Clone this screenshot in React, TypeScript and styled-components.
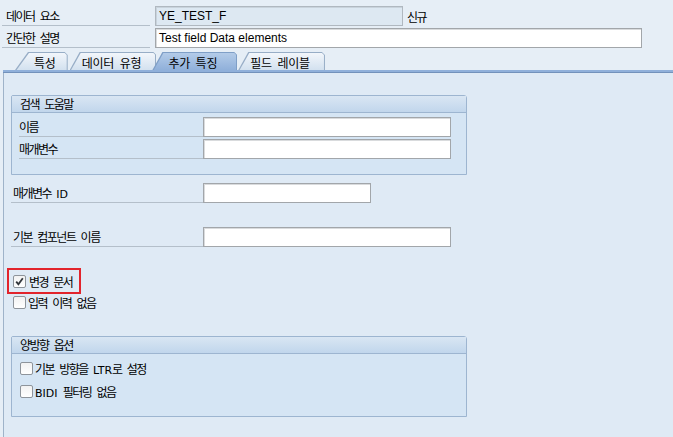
import { createGlobalStyle } from "styled-components";
import styled, { css } from "styled-components";

const GlobalStyle = createGlobalStyle`
  body {
    margin: 0;
    font-family: "Noto Sans CJK KR", "Liberation Sans", sans-serif;
    font-size: 12px;
    color: #000000;
  }
`;

const Page = styled.div`
  width: 673px;
  height: 437px;
  overflow: hidden;
  background: #e6eef6;
  display: flex;
  flex-direction: column;
`;

const Header = styled.div`
  display: flex;
  flex-direction: column;
  gap: 2px;
  padding-top: 6px;
`;

const HeadRow = styled.div`
  display: flex;
  align-items: flex-end;
  height: 20px;
`;

const Label = styled.div<{ width: number; pad?: number }>`
  width: ${({ width }) => width}px;
  height: 20px;
  box-sizing: border-box;
  padding-left: ${({ pad }) => pad ?? 0}px;
  border-bottom: 1px solid #b4bfca;
  line-height: 19px;
  letter-spacing: -1.5px;
  word-spacing: 4px;
  white-space: pre;
`;

const HeadLabel = styled(Label)`
  margin-left: 2px;
  margin-right: 5px;
`;

// latin parts of mixed labels keep their natural spacing
const Latin = styled.span`
  letter-spacing: 0;
  font-family: "DejaVu Sans", sans-serif;
  font-size: 11px;
`;

const Caption = styled.span`
  white-space: pre;
`;

interface IBoxProps {
  readOnly?: boolean;
  width: number;
}

const Box = styled.div<IBoxProps>`
  width: ${({ width }) => width}px;
  height: 20px;
  box-sizing: border-box;
  border: 1px solid #a2a6aa;
  box-shadow: inset 1px 1px 0 #d9dbdd;
  background: #ffffff;
  padding: 0 3px;
  display: flex;
  align-items: center;
  font-family: "Liberation Sans", sans-serif;
  font-size: 12px;
  white-space: nowrap;

  ${({ readOnly }) =>
    readOnly &&
    css`
      background: #dde8f2;
      border-color: #b0b8c0;
      box-shadow: inset 1px 1px 0 #c9d3dc;
    `}
`;

const Status = styled.span`
  margin-left: 4px;
  align-self: center;
  letter-spacing: -1.5px;
`;

const TabStrip = styled.div`
  display: flex;
  align-items: flex-end;
  height: 18px;
  margin-top: 4px;
  padding-left: 15px;
`;

interface ITabProps {
  active?: boolean;
  first?: boolean;
}

const Tab = styled.div<ITabProps>`
  position: relative;
  height: 18px;
  box-sizing: border-box;
  padding: 2px 15px 0 12px;
  margin-right: 2px;
  display: flex;
  align-items: center;
  letter-spacing: -0.2px;
  word-spacing: 3px;
  white-space: nowrap;
  background: #97adc6;
  clip-path: polygon(0 100%, 10px 0, calc(100% - 3px) 0, 100% 3px, 100% 100%);

  &::before {
    content: "";
    position: absolute;
    top: 1px;
    left: 0;
    right: 1px;
    bottom: 0;
    background: linear-gradient(#f2f6fb, #d3e1ef);
    clip-path: polygon(1.4px 100%, 11px 0, calc(100% - 2px) 0, 100% 2px, 100% 100%);
  }

  span {
    position: relative;
  }

  ${({ first }) =>
    first &&
    css`
      padding-left: 19px;
      padding-right: 12px;
      clip-path: polygon(0 100%, 13px 0, calc(100% - 3px) 0, 100% 3px, 100% 100%);
      &::before {
        clip-path: polygon(1.6px 100%, 14px 0, calc(100% - 2px) 0, 100% 2px, 100% 100%);
      }
    `}

  ${({ active }) =>
    active &&
    css`
      margin-left: -6px;
      margin-right: 1px;
      padding-left: 16px;
      padding-right: 20px;
      background: #7f9fc7;
      &::before {
        background: linear-gradient(#b3cbe8, #90b0da);
      }
    `}
`;

const TabLine = styled.div`
  margin-left: 3px;
  height: 3px;
  background: linear-gradient(#90b0da 0 2px, #7392bb 2px);
`;

const Panel = styled.div`
  flex: 1;
  margin-left: 3px;
  border-left: 1px solid #9fb3c9;
  background: #dfeaf5;
  padding: 22px 0 0 7px;
  display: flex;
  flex-direction: column;
`;

const Group = styled.div<{ height: number }>`
  width: 456px;
  height: ${({ height }) => height}px;
  box-sizing: border-box;
  border: 1px solid #9db5d0;
  border-radius: 2px 3px 0 0;
  background: #d5e5f4;
  display: flex;
  flex-direction: column;
`;

const GroupTitle = styled.div`
  height: 17px;
  box-sizing: border-box;
  border-bottom: 1px solid #9db5d0;
  background: linear-gradient(#d9e6f3, #c1d6ec);
  padding-left: 8px;
  line-height: 16px;
  letter-spacing: -1.5px;
  word-spacing: 4px;
  white-space: pre;
`;

const GroupBody = styled.div<{ gap: number; top: number; left: number }>`
  display: flex;
  flex-direction: column;
  gap: ${({ gap }) => gap}px;
  padding: ${({ top }) => top}px 0 0 ${({ left }) => left}px;
`;

const FieldRow = styled.div`
  display: flex;
  align-items: flex-end;
  height: 20px;
`;

const Spacer = styled.div<{ h: number }>`
  height: ${({ h }) => h}px;
  flex: none;
`;

const CheckRow = styled.label<{ marked?: boolean; indent?: number }>`
  display: flex;
  align-items: center;
  gap: 2px;
  height: 20px;
  width: max-content;
  box-sizing: border-box;
  margin-left: ${({ indent }) => indent ?? 0}px;
  letter-spacing: -1.5px;
  word-spacing: 4px;

  ${({ marked }) =>
    marked &&
    css`
      outline: 2px solid #e2242c;
      padding: 0 7px 0 4px;
      margin-left: -2px;
      height: 22px;
      gap: 3px;
    `}
`;

const CheckBox = styled.span`
  width: 13px;
  height: 13px;
  box-sizing: border-box;
  border: 1px solid #8e949b;
  border-radius: 2px;
  background: linear-gradient(#f2f2f2, #ffffff);
  display: flex;
  align-items: center;
  justify-content: center;
`;

const Check = () => (
  <svg width="9" height="9" viewBox="0 0 9 9">
    <path d="M1.2 4.6 L3.4 7.2 L7.8 1.2" fill="none" stroke="#33373c" strokeWidth="1.8" />
  </svg>
);

export default function App() {
  return (
    <Page>
      <GlobalStyle />
      <Header>
        <HeadRow>
          <HeadLabel width={148} pad={4}>
            데이터 요소
          </HeadLabel>
          <Box width={248} readOnly>
            YE_TEST_F
          </Box>
          <Status>신규</Status>
        </HeadRow>
        <HeadRow>
          <HeadLabel width={148} pad={4}>
            간단한 설명
          </HeadLabel>
          <Box width={487}>Test field Data elements</Box>
        </HeadRow>
      </Header>
      <TabStrip>
        <Tab first>
          <span>특성</span>
        </Tab>
        <Tab>
          <span>데이터 유형</span>
        </Tab>
        <Tab active>
          <span>추가 특징</span>
        </Tab>
        <Tab>
          <span>필드 레이블</span>
        </Tab>
      </TabStrip>
      <TabLine />
      <Panel>
        <Group height={80}>
          <GroupTitle>검색 도움말</GroupTitle>
          <GroupBody gap={2} top={4} left={7}>
            <FieldRow>
              <Label width={184}>이름</Label>
              <Box width={248} />
            </FieldRow>
            <FieldRow>
              <Label width={184}>매개변수</Label>
              <Box width={248} />
            </FieldRow>
          </GroupBody>
        </Group>
        <Spacer h={8} />
        <FieldRow>
          <Label width={192} pad={2}>
            매개변수 <Latin>ID</Latin>
          </Label>
          <Box width={168} />
        </FieldRow>
        <Spacer h={24} />
        <FieldRow>
          <Label width={192} pad={2}>
            기본 컴포넌트 이름
          </Label>
          <Box width={248} />
        </FieldRow>
        <Spacer h={23} />
        <CheckRow marked>
          <CheckBox>
            <Check />
          </CheckBox>
          <Caption>변경 문서</Caption>
        </CheckRow>
        <CheckRow indent={2}>
          <CheckBox />
          <Caption>입력 이력 없음</Caption>
        </CheckRow>
        <Spacer h={24} />
        <Group height={81}>
          <GroupTitle>양방향 옵션</GroupTitle>
          <GroupBody gap={3} top={4} left={8}>
            <CheckRow>
              <CheckBox />
              <Caption>
                기본 방향을 <Latin>LTR</Latin>로 설정
              </Caption>
            </CheckRow>
            <CheckRow>
              <CheckBox />
              <Caption>
                <Latin>BIDI</Latin> 필터링 없음
              </Caption>
            </CheckRow>
          </GroupBody>
        </Group>
      </Panel>
    </Page>
  );
}
